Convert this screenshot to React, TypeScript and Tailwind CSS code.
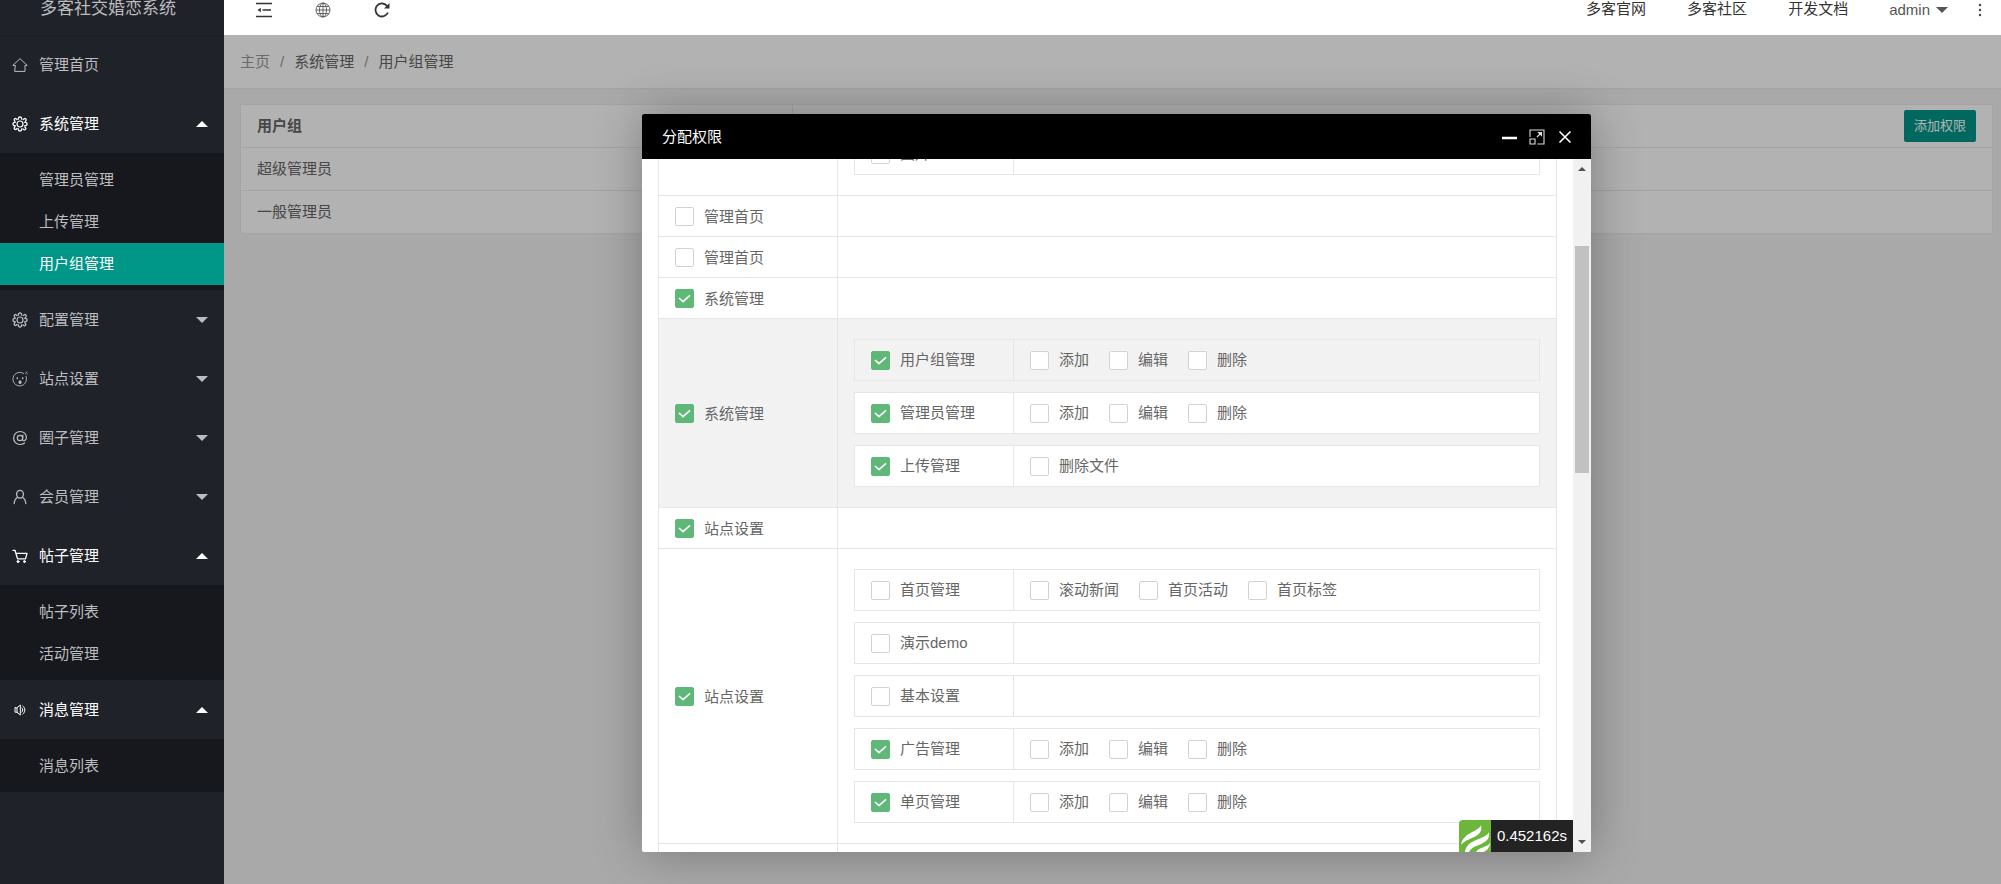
import { useLayoutEffect, useRef, useState, type ReactNode } from 'react'
import clsx from 'clsx'

interface MenuGroup {
  title: string
  icon: ReactNode
  open?: boolean
  children?: string[]
}

interface Page {
  name: string
  checked?: boolean
  actions?: string[]
  hovered?: boolean
}

interface Permission {
  name?: string
  checked?: boolean
  hovered?: boolean
  pages?: Page[]
}

const iconProps = {
  viewBox: '0 0 16 16',
  fill: 'none',
  stroke: 'currentColor',
  strokeLinecap: 'round' as const,
  strokeLinejoin: 'round' as const,
  'aria-hidden': true,
}

const HomeIcon = () => (
  <svg {...iconProps} className="size-4">
    <path d="M3 8.400H.8L8 1.700l7.200 6.700H13v6H3z" />
  </svg>
)

const GearIcon = () => (
  <svg {...iconProps} className="size-4">
    <circle cx="8" cy="8" r="3" strokeWidth={1.2} />
    <path
      d="M6.400 3.200C6 .2 10 .2 9.600 3.200M11.300 3.500c1.800-2.400 4.200.1 2 1.900M12.800 6.400c3-.4 3 3.600 0 3.200M12.800 10.900c2.400 1.800-.1 4.200-1.900 2M9.600 12.800c.4 3-3.600 3-3.200 0M5.100 12.500c-1.800 2.400-4.200-.1-2-1.900M3.200 9.600c-3 .4-3-3.600 0-3.200M3.100 5.400C.9 3.600 3.300 1.100 5.100 3.500"
      strokeWidth={1.3}
    />
  </svg>
)

const FaceIcon = () => (
  <svg {...iconProps} className="size-4">
    <path d="M11.600 2.500A6.800 6.800 0 1 0 14 5.400" strokeWidth={0.9} />
    <path d="M13.400 2.300 15 1M15.200 3h.1" strokeWidth={0.9} />
    <ellipse cx="8" cy="11.2" rx="1" ry="1.6" fill="currentColor" />
    <path d="M5.300 7v.4M10.700 7v.4" strokeWidth={1.6} />
  </svg>
)

const AtIcon = () => (
  <svg {...iconProps} className="size-4">
    <circle cx="8" cy="8" r="2.7" strokeWidth={1.2} />
    <path
      d="M10.900 5.200 10.500 9.500c0 2.100 3.900 1.600 3.900-2 0-3.500-2.700-6-6.200-6C4.400 1.500 1.600 4.400 1.600 8s2.700 6.500 6.500 6.500c1.700 0 3.200-.5 4.400-1.500"
      strokeWidth={1.2}
    />
  </svg>
)

const UserIcon = () => (
  <svg {...iconProps} className="size-4">
    <ellipse cx="8" cy="5.2" rx="3.4" ry="3.9" strokeWidth={1.3} />
    <path d="M5.700 8.300C3.600 9.600 2.300 11.800 2.200 14.500M10.300 8.300c2.100 1.300 3.400 3.500 3.500 6.200" strokeWidth={1.3} />
  </svg>
)

const CartIcon = () => (
  <svg {...iconProps} className="size-4">
    <path d="M1 2.300h2l2.500 8.500h8M4 5.300h11l-1.500 5.500" strokeWidth={1.3} />
    <circle cx="6" cy="13.6" r="1" fill="currentColor" />
    <circle cx="12.5" cy="13.6" r="1" fill="currentColor" />
  </svg>
)

const SpeakerIcon = () => (
  <svg {...iconProps} className="size-4">
    <path d="M3 5.800v4.400h2L8.300 13V3L5 5.800zM5 5.800v4.400M10 6c1 1.200 1 2.800 0 4M10.800 4c2.800 2 2.800 6 0 8" />
  </svg>
)

const CaretDown = ({ className }: { className?: string }) => (
  <svg viewBox="0 0 12 6" fill="currentColor" className={clsx('h-1.5 w-3', className)} aria-hidden>
    <path d="M0 0h12L6 6z" />
  </svg>
)

const menu: MenuGroup[] = [
  { title: '管理首页', icon: <HomeIcon /> },
  { title: '系统管理', icon: <GearIcon />, open: true, children: ['管理员管理', '上传管理', '用户组管理'] },
  { title: '配置管理', icon: <GearIcon />, children: [] },
  { title: '站点设置', icon: <FaceIcon />, children: [] },
  { title: '圈子管理', icon: <AtIcon />, children: [] },
  { title: '会员管理', icon: <UserIcon />, children: [] },
  { title: '帖子管理', icon: <CartIcon />, open: true, children: ['帖子列表', '活动管理'] },
  { title: '消息管理', icon: <SpeakerIcon />, open: true, children: ['消息列表'] },
]

const crud = ['添加', '编辑', '删除']

const permissions: Permission[] = [
  { pages: [{ name: '图片' }] },
  { name: '管理首页' },
  { name: '管理首页' },
  { name: '系统管理', checked: true },
  {
    name: '系统管理',
    checked: true,
    hovered: true,
    pages: [
      { name: '用户组管理', checked: true, actions: crud, hovered: true },
      { name: '管理员管理', checked: true, actions: crud },
      { name: '上传管理', checked: true, actions: ['删除文件'] },
    ],
  },
  { name: '站点设置', checked: true },
  {
    name: '站点设置',
    checked: true,
    pages: [
      { name: '首页管理', actions: ['滚动新闻', '首页活动', '首页标签'] },
      { name: '演示demo' },
      { name: '基本设置' },
      { name: '广告管理', checked: true, actions: crud },
      { name: '单页管理', checked: true, actions: crud },
    ],
  },
  {},
]

function Sidebar() {
  const [active, setActive] = useState('用户组管理')

  return (
    <aside className="w-56 shrink-0 bg-[#20222a] text-[#bcbdbf]">
      <div className="h-[35px] pl-10 text-[17px] leading-[18px] whitespace-nowrap shadow-[0_1px_2px_rgba(0,0,0,0.15)]">
        多客社交婚恋系统
      </div>
      <nav>
        {menu.map((group) => (
          <div key={group.title}>
            <button
              className={clsx(
                'flex h-[59px] w-full items-center gap-[11px] pr-4 pl-3 text-left',
                group.open && 'text-white',
              )}
            >
              {group.icon}
              <span className="flex-1">{group.title}</span>
              {group.children && <CaretDown className={clsx(group.open && 'rotate-180')} />}
            </button>
            {group.open && (
              <div className="bg-[#17181d] pt-1.5 pb-[5px]">
                {group.children?.map((item) => (
                  <a
                    key={item}
                    href="#"
                    onClick={() => setActive(item)}
                    className={clsx('block pl-[39px] leading-[42px]', active === item && 'bg-[#009688] text-white')}
                  >
                    {item}
                  </a>
                ))}
              </div>
            )}
          </div>
        ))}
      </nav>
    </aside>
  )
}

function Header() {
  return (
    <header className="flex h-[35px] items-start justify-between bg-white pr-[17px] pl-8 leading-[18px] text-[#333]">
      <div className="flex gap-[43px]">
        <button aria-label="收起菜单" className="flex h-5 w-4 items-center">
          <svg viewBox="0 0 16 16" fill="none" stroke="#333" strokeWidth={1.4} className="size-4" aria-hidden>
            <path d="M0 1.500h16M6.500 8H15M0 14.500h16" />
            <path d="M4.800 5.800v4.400L1.500 8z" fill="#333" stroke="none" />
          </svg>
        </button>
        <button aria-label="前台" className="flex h-5 w-4 items-center">
          <svg viewBox="0 0 16 16" fill="none" stroke="#555" strokeWidth={0.9} className="size-4" aria-hidden>
            <circle cx="8" cy="8" r="7" />
            <ellipse cx="8" cy="8" rx="3.5" ry="7" />
            <path d="M8 1v14M1 8h14M2.200 4.500h11.600M2.200 11.500h11.600" />
          </svg>
        </button>
        <button aria-label="刷新" className="flex h-5 w-4 items-center">
          <svg viewBox="0 0 16 16" fill="none" stroke="#333" strokeWidth={1.8} className="size-4" aria-hidden>
            <path d="M13.300 4.200A6.500 6.500 0 1 0 14 10.500" />
            <path d="M15.500 1v5.500H10z" fill="#333" stroke="none" />
          </svg>
        </button>
      </div>
      <div className="flex">
        <a href="#" className="mr-[41px]">多客官网</a>
        <a href="#" className="mr-[41px]">多客社区</a>
        <a href="#" className="mr-[41px]">开发文档</a>
        <button className="mr-7 flex items-center gap-1.5 text-[#555]">
          admin
          <CaretDown />
        </button>
        <button aria-label="更多" className="flex h-5 w-2 items-center justify-center">
          <svg viewBox="0 0 4 14" fill="#444" className="h-3.5 w-1" aria-hidden>
            <circle cx="2" cy="2" r="1.2" />
            <circle cx="2" cy="7" r="1.2" />
            <circle cx="2" cy="12" r="1.2" />
          </svg>
        </button>
      </div>
    </header>
  )
}

function UserGroups() {
  return (
    <>
      <div className="flex h-[53px] items-center gap-2.5 bg-white px-4 shadow-[0_1px_2px_rgba(0,0,0,0.05)]">
        <a href="#" className="text-[#999]">主页</a>
        <span className="text-[#999]">/</span>
        <span>系统管理</span>
        <span className="text-[#999]">/</span>
        <span>用户组管理</span>
      </div>
      <div className="px-2 pt-4 pl-4">
        <table className="w-full border-collapse border border-[#ebebeb] bg-white text-left">
          <thead>
            <tr className="h-[43px] border-b border-[#ebebeb]">
              <th className="w-[552px] border-r border-[#ebebeb] px-4 font-bold">用户组</th>
              <th className="px-4 text-right">
                <button className="h-8 rounded-xs bg-[#009688] px-2.5 align-middle text-[13px] font-normal text-white">
                  添加权限
                </button>
              </th>
            </tr>
          </thead>
          <tbody>
            {['超级管理员', '一般管理员'].map((name) => (
              <tr key={name} className="h-[43px] border-b border-[#ebebeb]">
                <td className="border-r border-[#ebebeb] px-4">{name}</td>
                <td />
              </tr>
            ))}
          </tbody>
        </table>
      </div>
    </>
  )
}

function Checkbox({ label, checked = false }: { label: string; checked?: boolean }) {
  const [on, setOn] = useState(checked)

  return (
    <label className="relative inline-flex items-center gap-2.5 align-middle whitespace-nowrap">
      <input
        type="checkbox"
        checked={on}
        onChange={(e) => setOn(e.target.checked)}
        className="size-[19px] appearance-none rounded-xs border border-[#d2d2d2] bg-white checked:border-[#5fb878] checked:bg-[#5fb878]"
      />
      {on && (
        <svg
          viewBox="0 0 19 19"
          fill="none"
          stroke="#fff"
          strokeWidth={1.6}
          className="pointer-events-none absolute left-0 size-[19px]"
          aria-hidden
        >
          <path d="m4 9 4 3.600 7-6.200" />
        </svg>
      )}
      <span>{label}</span>
    </label>
  )
}

function PermissionTable() {
  return (
    <table className="w-full border-collapse">
      <tbody>
        {permissions.map((item, i) => (
          <tr key={i} className={clsx('h-[41px]', item.hovered && 'bg-[#f2f2f2]')}>
            <td className="w-[179px] border border-[#e6e6e6] px-4">
              {item.name && <Checkbox label={item.name} checked={item.checked} />}
            </td>
            <td className="border border-[#e6e6e6] px-4">
              {item.pages && (
                <div className="flex flex-col gap-[11px] py-5">
                  {item.pages.map((page) => (
                    <div
                      key={page.name}
                      className={clsx(
                        'flex h-[42px] items-stretch border border-[#e6e6e6]',
                        page.hovered ? 'bg-[#f2f2f2]' : 'bg-white',
                      )}
                    >
                      <div className="flex w-[159px] items-center border-r border-[#e6e6e6] px-4">
                        <Checkbox label={page.name} checked={page.checked} />
                      </div>
                      <div className="flex items-center gap-5 px-4">
                        {page.actions?.map((action) => (
                          <Checkbox key={action} label={action} />
                        ))}
                      </div>
                    </div>
                  ))}
                </div>
              )}
            </td>
          </tr>
        ))}
      </tbody>
    </table>
  )
}

function Scrollbar() {
  return (
    <div className="flex w-[18px] shrink-0 flex-col items-center bg-[#f1f1f1] py-2">
      <svg viewBox="0 0 8 4" fill="#505050" className="h-1 w-2" aria-hidden>
        <path d="M0 4h8L4 0z" />
      </svg>
      <div className="mt-[75px] mb-auto h-[227px] w-3.5 bg-[#c1c1c1]" />
      <svg viewBox="0 0 8 4" fill="#505050" className="h-1 w-2" aria-hidden>
        <path d="M0 0h8L4 4z" />
      </svg>
    </div>
  )
}

function PermissionDialog() {
  const body = useRef<HTMLDivElement>(null)

  useLayoutEffect(() => {
    if (body.current) body.current.scrollTop = 47
  }, [])

  return (
    <div
      role="dialog"
      aria-label="分配权限"
      className="flex h-[738px] w-[949px] flex-col overflow-hidden rounded-xs bg-white shadow-[1px_1px_50px_rgba(0,0,0,0.3)]"
    >
      <div className="flex h-[45px] shrink-0 items-center justify-between bg-black pr-[18px] pl-5 text-white">
        <h2>分配权限</h2>
        <div className="flex items-center gap-3">
          <button aria-label="最小化">
            <svg viewBox="0 0 16 16" stroke="#fff" strokeWidth={2.4} className="size-4" aria-hidden>
              <path d="M1 9h15" />
            </svg>
          </button>
          <button aria-label="最大化">
            <svg viewBox="0 0 16 16" fill="none" stroke="#ddd" strokeWidth={1.1} className="size-4" aria-hidden>
              <path d="M1 8V1h14v14H8.500M1 10h5v5H1zM8 8l4-4" />
              <path d="M9.500 3.500h3v3z" fill="#ddd" />
            </svg>
          </button>
          <button aria-label="关闭">
            <svg viewBox="0 0 16 16" stroke="#fff" strokeWidth={1.6} className="size-4" aria-hidden>
              <path d="m2.500 2.500 11 11M13.500 2.500l-11 11" />
            </svg>
          </button>
        </div>
      </div>
      <div className="relative flex min-h-0 flex-1">
        <div ref={body} className="min-w-0 flex-1 overflow-hidden px-4">
          <PermissionTable />
        </div>
        <Scrollbar />
        <div className="absolute right-[18px] bottom-0 flex h-8 items-center bg-[#232323] text-white">
          <svg viewBox="0 0 32 32" className="size-8" aria-hidden>
            <rect width="32" height="32" fill="#fff" />
            <path d="M0 4a4 4 0 0 1 4-4h28v32H0z" fill="#6cb63c" />
            <path
              d="M22 5C20 12 4 12 2 25 8 17 25 18 22 5zM30 12C27 20 8 18 6 32h4C14 23 32 26 30 12zM31 23c-2 4-11 4-14 9h7c4-1 7-5 7-9z"
              fill="#fff"
            />
          </svg>
          <span className="px-1.5">0.452162s</span>
        </div>
      </div>
    </div>
  )
}

export default function App() {
  return (
    <div className="flex min-h-screen font-['Liberation_Sans','Noto_Sans_CJK_SC',sans-serif] text-[15px] leading-6 text-[#666]">
      <Sidebar />
      <div className="flex min-w-0 flex-1 flex-col">
        <Header />
        <main className="relative flex-1 overflow-hidden bg-[#f2f2f2]">
          <UserGroups />
          <div className="absolute inset-0 flex items-start justify-center bg-black/30 pt-[79px] pl-2">
            <PermissionDialog />
          </div>
        </main>
      </div>
    </div>
  )
}
